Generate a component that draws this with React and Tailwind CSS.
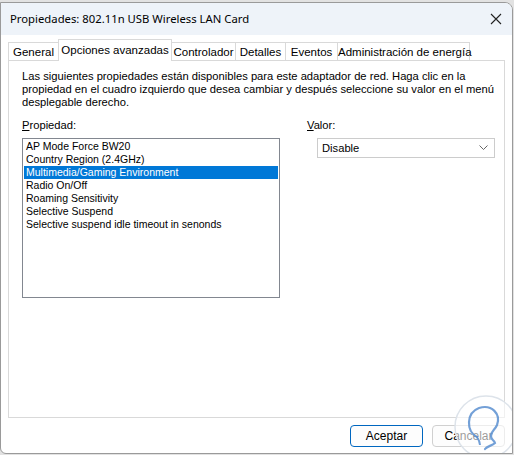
import React from "react"

const props = [
  "AP Mode Force BW20",
  "Country Region (2.4GHz)",
  "Multimedia/Gaming Environment",
  "Radio On/Off",
  "Roaming Sensitivity",
  "Selective Suspend",
  "Selective suspend idle timeout in senonds",
]

const tabs = [
  { name: "General", w: "w-[50px]" },
  { name: "Opciones avanzadas", w: "w-[114px]" },
  { name: "Controlador", w: "w-[64px]" },
  { name: "Detalles", w: "w-[50px]" },
  { name: "Eventos", w: "w-[52px]" },
  { name: "Administración de energía", w: "w-[132px]" },
]

const Watermark = () => (
  <svg
    className="absolute right-[-6px] bottom-[-6px] pointer-events-none"
    width="68"
    height="66"
    viewBox="0 0 68 66"
  >
    <circle cx="36" cy="34" r="31" fill="#ffffff" fillOpacity="0.6" stroke="#dde3ea" strokeWidth="1.5" />
    <path
      d="M27 44 C16 38 16 20 29 15 C42 11 51 21 47 32 C45 37 41 38 41 43 C41 47 44 47 45 50 C42 53 37 53 35 56"
      fill="none"
      stroke="#5b8fd0"
      strokeWidth="2.2"
      strokeLinecap="round"
      strokeOpacity="0.85"
    />
    <path d="M27 44 C29 47 30 49 30 52" fill="none" stroke="#5b8fd0" strokeWidth="2" strokeOpacity="0.85" />
  </svg>
)

export default function App() {
  return (
    <div className="w-[514px] h-[455px] bg-[#e2e2e2] pt-[2px] font-['Liberation_Sans',Arial,sans-serif]">
      <div className="relative w-[513px] h-[452px] bg-white border border-[#9a9a9a] rounded-tr-[8px] rounded-bl-[6px] overflow-hidden flex flex-col">
        <div className="h-[32px] bg-[#eef3f9] flex items-center justify-between pl-[9px] pr-[10px] shrink-0">
          <span className="text-[11.3px] text-black font-['Noto_Sans',sans-serif]">
            Propiedades: 802.11n USB Wireless LAN Card
          </span>
          <svg width="12" height="12" viewBox="0 0 12 12">
            <path d="M1 1 L11 11 M11 1 L1 11" stroke="#222" strokeWidth="1.1" />
          </svg>
        </div>

        <div className="px-[7px] pt-[4px]">
          <div className="flex items-end h-[21px]">
            {tabs.map((t, i) =>
              i === 1 ? (
                <div
                  key={t.name}
                  className={`${t.w} relative z-10 h-[22px] -mb-px bg-white border border-b-0 border-[#d9d9d9] pt-[2px] text-center whitespace-nowrap text-[11.5px] text-black`}
                >
                  {t.name}
                </div>
              ) : (
                <div
                  key={t.name}
                  className={`${t.w} h-[18px] border border-b-0 border-[#d9d9d9] pt-[2px] text-center whitespace-nowrap text-[11.5px] leading-[14px] text-black bg-white ${i > 1 ? "border-l-0" : ""} ${i === 0 ? "border-r-0" : ""}`}
                >
                  {t.name}
                </div>
              )
            )}
          </div>

          <div className="h-[358px] border border-[#d9d9d9] bg-white pl-[13px] pr-[9px] pt-[9px] text-[11.2px] leading-[13px] text-black">
            <p className="whitespace-nowrap">
              Las siguientes propiedades están disponibles para este adaptador de red. Haga clic en la
              <br />
              propiedad en el cuadro izquierdo que desea cambiar y después seleccione su valor en el menú
              <br />
              desplegable derecho.
            </p>

            <div className="flex mt-[10px]">
              <div className="w-[258px] shrink-0">
                <div className="h-[15px]">
                  <span className="underline">P</span>ropiedad:
                </div>
                <div className="mt-[4px] h-[160px] border border-[#828790] p-px text-[10.5px]">
                  {props.map((p, i) => (
                    <div
                      key={p}
                      className={`h-[13px] leading-[13px] pl-[2px] ${i === 2 ? "bg-[#0078d7] text-white" : ""}`}
                    >
                      {p}
                    </div>
                  ))}
                </div>
              </div>

              <div className="ml-[27px] w-[188px] shrink-0">
                <div className="h-[15px]">
                  <span className="underline">V</span>alor:
                </div>
                <div className="mt-[4px] ml-[10px] h-[20px] border border-[#cccccc] flex items-center justify-between pl-[4px] pr-[6px]">
                  <span>Disable</span>
                  <svg width="9" height="6" viewBox="0 0 9 6">
                    <path d="M0.5 0.5 L4.5 4.5 L8.5 0.5" fill="none" stroke="#555" strokeWidth="0.9" />
                  </svg>
                </div>
              </div>
            </div>
          </div>

          <div className="flex justify-end gap-[9px] mt-[7px] text-[12px] text-black">
            <button className="w-[73px] h-[22px] rounded-[4px] border border-[#0067c0] bg-[#fdfdfd]">
              Aceptar
            </button>
            <button className="w-[73px] h-[22px] rounded-[4px] border border-[#d0d0d0] bg-[#fdfdfd]">
              Cancelar
            </button>
          </div>
        </div>

        <Watermark />
      </div>
    </div>
  )
}
